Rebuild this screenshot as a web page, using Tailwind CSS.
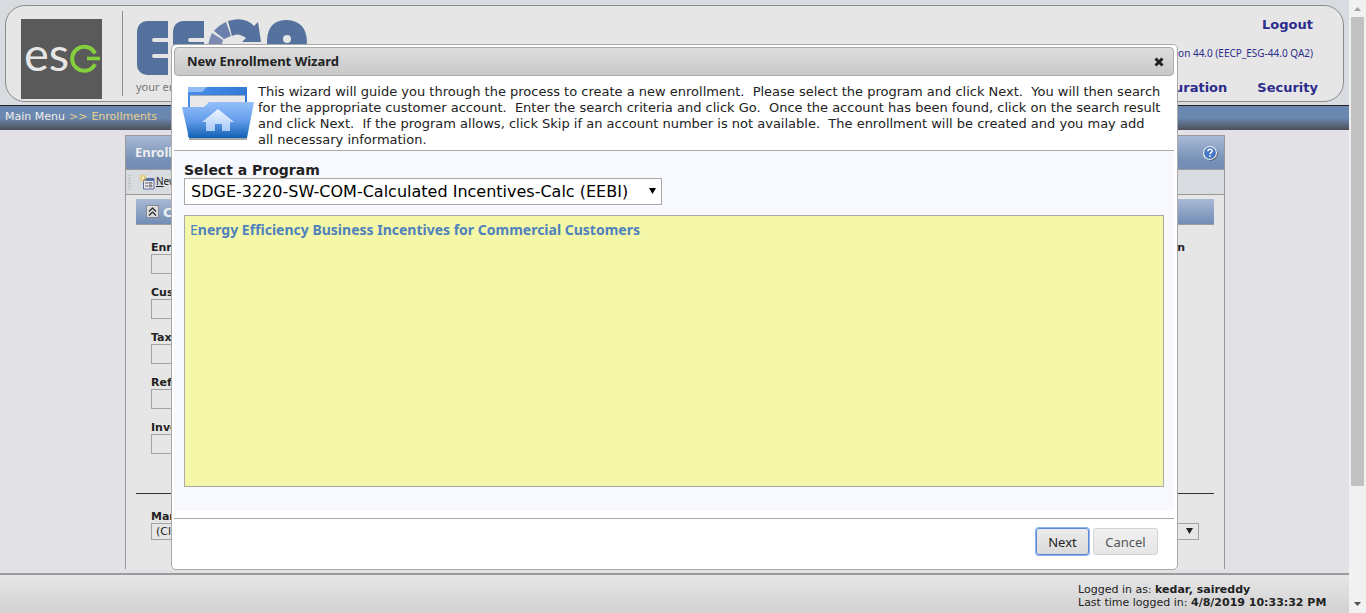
<!DOCTYPE html>
<html lang="en">
<head>
<meta charset="utf-8">
<meta name="viewport" content="width=device-width, initial-scale=1">
<title>Enrollments</title>
<script src="https://cdn.jsdelivr.net/npm/@tailwindcss/browser@4"></script>
</head>
<body class="bg-[#e2e1e6] text-[#222]" style="font-family:'DejaVu Sans',sans-serif">
<div class="flex h-screen overflow-hidden">
  <div class="relative flex min-w-0 flex-1 flex-col">
    <header class="bg-[#d8dce1] px-[5px] pt-[5px] pb-[3px]">
      <div class="flex h-[97px] justify-between rounded-[20px] border border-[#8b8b8b] bg-[#e6e6e6] px-[15px]">
        <div class="flex">
          <div class="mt-[13px] h-20 w-[81px] bg-[#5a5a5a]">
            <svg class="h-20 w-[81px]" viewBox="0 0 81 80" role="img" aria-label="esg">
              <text x="3" y="52" font-size="47" font-family="Lato" fill="#e6e6e6">es</text>
              <path d="M74 34.500A12 12 0 1 0 74 45" fill="none" stroke="#84cf3d" stroke-width="4"/>
              <path d="M66 39.500H79" stroke="#84cf3d" stroke-width="3.600"/>
            </svg>
          </div>
          <div class="mt-[5px] ml-5 h-[85px] w-px bg-[#8b8b8b]"></div>
          <div class="mt-[13px] ml-[13px] w-[180px]">
            <svg class="h-[58px] w-[172px]" viewBox="0 0 172 58" role="img" aria-label="EECP">
              <g fill="#55719e">
                <rect x="1" y="2" width="31" height="54" rx="10"/><rect x="14" y="2" width="18" height="54"/>
                <rect x="37" y="2" width="31" height="54" rx="10"/><rect x="50" y="2" width="18" height="54"/>
                <path d="M92 2Q109-3 118 7L122 3L125 23H106L110 19Q102 13 96 17Z"/>
                <path d="M131 56V21Q132 1 151 1Q170 2 171 22Q170 38 152 40V56Z"/>
              </g>
              <path d="M90 3L95 17L88 20L78 12Q83 6 90 3Z" fill="#6a7fac"/>
              <path d="M76 14L87 21L84 32H72Q72 22 76 14Z" fill="#7b8bb1"/>
              <g fill="#e6e6e6">
                <rect x="16" y="19" width="20" height="4" rx="2"/><rect x="16" y="35" width="20" height="4" rx="2"/>
                <rect x="52" y="19" width="18" height="4" rx="2"/><rect x="52" y="35" width="18" height="4" rx="2"/>
                <circle cx="151" cy="20" r="4"/>
              </g>
            </svg>
            <p class="mt-[2px] text-[11px] leading-4 text-[#777]" style="font-family:'Noto Sans',sans-serif">your energy</p>
          </div>
        </div>
        <div class="flex flex-col items-end text-[#2c2c8c]">
          <a href="#" class="mt-[11px] mr-[15px] text-[13px] leading-4 font-bold">Logout</a>
          <p class="mt-3 mr-[15px] text-[10px] leading-4" style="font-family:'Noto Sans',sans-serif">Version 44.0 (EECP_ESG-44.0 QA2)</p>
          <nav class="mt-[19px] mr-[10px] flex gap-[30px] text-[13px] leading-4 font-bold">
            <a href="#">Configuration</a><a href="#">Security</a>
          </nav>
        </div>
      </div>
    </header>
    <nav aria-label="Breadcrumb" class="flex h-[25px] shrink-0 items-center gap-1 border-t border-[#222] bg-linear-to-b from-[#6b88b0] from-50% to-[#4b4f59] px-[5px] pb-px text-[11px] text-[#e8cf8e]">
      <a href="#" class="text-[#eee]">Main Menu</a><span>&gt;&gt;</span><a href="#">Enrollments</a>
    </nav>
    <main class="flex min-h-0 flex-1 flex-col px-[124px] pt-[5px] pb-1">
      <section class="ml-px flex flex-1 flex-col border border-b-0 border-[#999] bg-[#e6e6e6]">
        <div class="flex h-[34px] items-center justify-between border-b border-[#999] bg-linear-to-b from-[#a8b9d4] to-[#738db5] to-80% px-[9px]">
          <h1 class="text-[13px] font-bold text-[#eee]" style="font-family:'Noto Sans',sans-serif">Enrollment</h1>
          <button aria-label="Help" class="-mr-[3px]"><svg class="size-4" viewBox="0 0 16 16"><circle cx="9" cy="9" r="6.500" fill="#333"/><circle cx="8" cy="8" r="6.500" fill="#4778c5" stroke="#ececec" stroke-width="1.200"/><path d="M5.800 6.200Q6 4.200 8 4.200T10.200 6Q10.200 7 8.900 7.700Q8 8.200 8 9.200" fill="none" stroke="#fff" stroke-width="1.500"/><path d="M8 10.500V12" stroke="#fff" stroke-width="1.600"/></svg></button>
        </div>
        <div class="flex h-[25px] items-center border-b border-[#999] bg-[#d8dce1] pl-[2px]">
          <svg class="h-4 w-[3px]" viewBox="0 0 3 16"><path d="M1.500 1V16" stroke="#c4c4c6" stroke-width="3" stroke-dasharray="1 1"/></svg>
          <button class="ml-2 flex items-center pb-px text-[10px]" style="font-family:'Noto Sans',sans-serif">
            <svg class="size-4" viewBox="0 0 16 16"><path d="M4.500 4.500H15V15H4.500Z" fill="#eee" stroke="#5a6f9b"/><path d="M5 5H15V7H5Z" fill="#5472b0"/><path d="M6 9H9M6 12H9" stroke="#556" stroke-width="1"/><path d="M10 8.500H13V10H10ZM10 11.500H13V13H10Z" fill="#fff" stroke="#556" stroke-width=".8"/><path d="M4 0V8M0 4H8M1 1L7 7M7 1L1 7" stroke="#e8bd45"/><circle cx="4" cy="4" r="1.500" fill="#fff2b5"/></svg>
            <span class="ml-px"><u>N</u>ew</span>
          </button>
        </div>
        <div class="px-[10px] pt-1">
          <div class="flex h-[26px] items-center border-b border-[#a49a9c] bg-linear-to-b from-[#a8b9d4] to-[#738db5] pl-[10px]">
            <button aria-label="Collapse"><svg class="size-[13px]" viewBox="0 0 13 13"><rect x=".5" y=".5" width="12" height="12" fill="#dcdcdc" stroke="#555" stroke-dasharray="1 1"/><path d="M3 6.500L6.500 3L10 6.500M3 10.500L6.500 7L10 10.500" fill="none" stroke="#222" stroke-width="1.200"/></svg></button>
            <h2 class="mt-[3px] ml-1 text-[13px] font-bold text-[#eee]">Customer</h2>
          </div>
          <div class="flex justify-between px-[15px] pt-4 text-[11px] leading-[14px] font-bold">
            <div class="flex flex-col gap-[12px]">
              <label>Enrollment<input class="-mt-px block h-5 w-[180px] border border-[#a3a3a3] bg-[#e6e6e6]"></label>
              <label>Customer<input class="-mt-px block h-5 w-[180px] border border-[#a3a3a3] bg-[#e6e6e6]"></label>
              <label>Tax<input class="-mt-px block h-5 w-[180px] border border-[#a3a3a3] bg-[#e6e6e6]"></label>
              <label>Reference<input class="-mt-px block h-5 w-[180px] border border-[#a3a3a3] bg-[#e6e6e6]"></label>
              <label>Invoice<input class="-mt-px block h-5 w-[180px] border border-[#a3a3a3] bg-[#e6e6e6]"></label>
            </div>
            <span class="mr-[14px]">Description</span>
          </div>
          <hr class="mt-[39px] border-[#333]">
          <div class="px-[15px] pt-4 text-[11px] leading-[14px]">
            <label for="manager" class="-mb-px block font-bold">Manager</label>
            <div class="relative">
              <select id="manager" class="block h-[17px] w-full appearance-none border border-[#a3a3a3] bg-[#e6e6e6] pl-1 text-[11px] leading-[14px]"><option>(Click to select)</option></select>
              <svg class="pointer-events-none absolute top-[5px] right-[6px] h-[6px] w-[7px]" viewBox="0 0 7 6"><path d="M0 0H7L3.500 6Z" fill="#222"/></svg>
            </div>
          </div>
        </div>
      </section>
    </main>
    <footer class="flex h-10 shrink-0 justify-end border-t-2 border-[#9b9b9b] bg-linear-to-b from-[#e6e6e6] to-[#d2d2d2] pr-5 text-[11px] leading-[13px]">
      <div class="mt-2"><p class="w-[251px]">Logged in as: <b>kedar, saireddy</b></p><p class="whitespace-nowrap">Last time logged in: <b>4/8/2019 10:33:32 PM</b></p></div>
    </footer>

    <div class="absolute inset-x-0 top-11 flex justify-center">
      <div role="dialog" aria-labelledby="dialog-title" class="flex w-[1007px] flex-col rounded-[5px] border border-[#aaa] bg-white py-0.5 pr-[3px] pl-0.5">
        <div class="flex h-[29px] items-center justify-between rounded-[4px] border border-[#aaa] bg-linear-to-b from-[#dedede] to-[#c8c8c8] pr-2 pl-3">
          <h2 id="dialog-title" class="text-[13px] font-bold" style="font-family:'Noto Sans',sans-serif">New Enrollment Wizard</h2>
          <button aria-label="Close"><svg class="size-3" viewBox="0 0 12 12"><path d="M2.500 2.500L9.500 9.500M9.500 2.500L2.500 9.500" stroke="#222" stroke-width="3"/></svg></button>
        </div>
        <div class="flex h-[75px] gap-1 border-b border-[#aaa] pt-2 pl-2 text-[13px] leading-4">
          <svg class="h-[60px] w-[72px] shrink-0" viewBox="0 0 72 60" aria-hidden="true">
            <defs>
              <linearGradient id="front" x2="0" y2="1"><stop stop-color="#94c0fb"/><stop offset=".5" stop-color="#659eea"/><stop offset="1" stop-color="#1260b4"/></linearGradient>
              <linearGradient id="back" x2="1" y2="1"><stop stop-color="#4a92eb"/><stop offset="1" stop-color="#1d64c1"/></linearGradient>
              <linearGradient id="house" x2="0" y2="1"><stop stop-color="#eef5ff"/><stop offset="1" stop-color="#a9cafa"/></linearGradient>
            </defs>
            <path d="M7 53H65V56H7Z" fill="#aaa"/>
            <path d="M6 3H65V53H6Z" fill="url(#back)"/><path d="M6 3H25L20 8H6Z" fill="#90bdf7"/>
            <path d="M8 12H63V35H8Z" fill="#e9e9e9"/><path d="M8 11H63V12H8Z" fill="#9ca8b8"/>
            <path d="M0 23H22L27 18H72L65 54H7Z" fill="url(#front)"/>
            <path d="M36 25L52 38H48V47H40V40H33V47H24V38H20Z" fill="url(#house)"/>
          </svg>
          <p class="w-[905px]">This wizard will guide you through the process to create a new enrollment.&nbsp; Please select the program and click Next.&nbsp; You will then search for the appropriate customer account.&nbsp; Enter the search criteria and click Go.&nbsp; Once the account has been found, click on the search result and click Next.&nbsp; If the program allows, click Skip if an account number is not available.&nbsp; The enrollment will be created and you may add all necessary information.</p>
        </div>
        <div class="h-[360px] bg-[#f8f9ff] px-[10px] pt-[11px]">
          <label for="program" class="block text-[14px] leading-4 font-bold">Select a Program</label>
          <div class="relative w-[478px]">
            <select id="program" class="block h-[27px] w-full appearance-none border border-[#a9a9a9] bg-white pl-[6px] text-[16px] text-black"><option>SDGE-3220-SW-COM-Calculated Incentives-Calc (EEBI)</option></select>
            <svg class="pointer-events-none absolute top-[10px] right-[6px] h-[6px] w-[7px]" viewBox="0 0 7 6"><path d="M0 0H7L3.500 6Z" fill="#000"/></svg>
          </div>
          <div class="mt-[10px] h-[272px] border border-[#aaa] bg-[#f4f7a7] px-[5px] pt-1 text-[14px] leading-5 font-bold text-[#4f81bd]" style="font-family:'Noto Sans',sans-serif"><span class="font-normal">E</span>nergy Efficiency Business Incentives for Commercial Customers</div>
        </div>
        <div class="mt-[7px] flex h-[49px] justify-end gap-1 border-t border-[#aaa] pt-[9px] pr-4 text-[13px]" style="font-family:'Noto Sans',sans-serif">
          <button class="h-[27px] w-[53px] rounded-[3px] border border-[#5f87cf] bg-linear-to-b from-[#ececec] to-[#dadada] pt-0.5 ring-1 ring-[#8ab2f5]">Next</button>
          <button class="h-[27px] w-[65px] rounded-[3px] border border-[#d3d3d3] bg-linear-to-b from-[#f0f0f0] to-[#e6e6e6] pt-0.5 text-[#555]">Cancel</button>
        </div>
      </div>
    </div>
  </div>
  <div aria-hidden="true" class="flex w-[17px] shrink-0 flex-col items-center bg-[#f1f1f1]">
    <svg class="h-[17px] w-[17px]" viewBox="0 0 17 17"><path d="M5 11L8.500 7L12 11Z" fill="#a3a3a3"/></svg>
    <div class="h-[469px] w-[13px] bg-[#c1c1c1]"></div>
    <svg class="mt-auto h-[17px] w-[17px]" viewBox="0 0 17 17"><path d="M5 6L8.500 10L12 6Z" fill="#505050"/></svg>
  </div>
</div>
</body>
</html>
